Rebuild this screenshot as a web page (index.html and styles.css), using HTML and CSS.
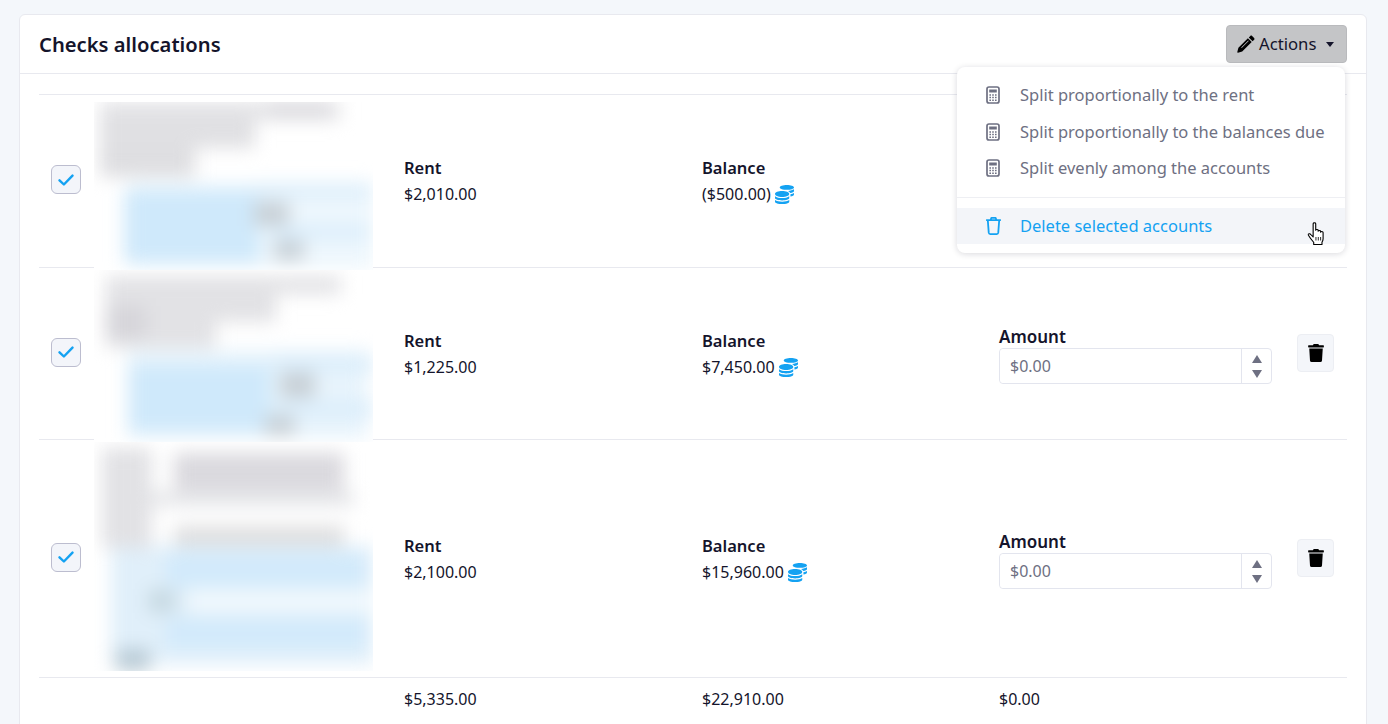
FILE: index.html
```html
<!DOCTYPE html>
<html lang="en">
<head>
    <meta charset="UTF-8">
    <meta name="viewport" content="width=device-width, initial-scale=1.0">
    <title>Checks allocations</title>
    <link rel="stylesheet" href="styles.css">
</head>
<body>
    <svg class="icon-defs" width="0" height="0" aria-hidden="true">
        <symbol id="i-coins" viewBox="0 0 512 512"><path d="M0 405.3V448c0 35.3 86 64 192 64s192-28.7 192-64v-42.7C342.7 434.4 267.2 448 192 448S41.3 434.4 0 405.3zM320 128c106 0 192-28.7 192-64S426 0 320 0 128 28.7 128 64s86 64 192 64zM0 300.4V352c0 35.3 86 64 192 64s192-28.7 192-64v-51.6c-41.3 34-116.9 51.6-192 51.6S41.3 334.4 0 300.4zm416 11c57.3-11.1 96-31.7 96-55.4v-42.7c-23.2 16.4-57.3 27.6-96 34.5v63.6zM192 160C86 160 0 195.8 0 240s86 80 192 80 192-35.8 192-80-86-80-192-80zm219.3 56.3c60-10.8 100.7-32 100.7-56.3v-42.7c-35.5 25.1-96.5 38.6-160.7 41.8 29.5 14.3 51.2 33.5 60 57.2z"/></symbol>
        <symbol id="i-trash" viewBox="0 0 448 512"><path d="M432 32H312l-9.4-18.7A24 24 0 0 0 281.1 0H166.8a23.72 23.72 0 0 0-21.4 13.3L136 32H16A16 16 0 0 0 0 48v32a16 16 0 0 0 16 16h416a16 16 0 0 0 16-16V48a16 16 0 0 0-16-16zM53.2 467a48 48 0 0 0 47.9 45h245.8a48 48 0 0 0 47.9-45L416 128H32z"/></symbol>
        <symbol id="i-calc" viewBox="0 0 14 18"><rect x="1" y="1" width="12" height="16" rx="2" fill="none" stroke="currentColor" stroke-width="1.7"/><path d="M3.2 3.4h7.6v3H3.2zM3.4 8.2h1.6v1.5H3.4zM6.2 8.2h1.6v1.5H6.2zM9 8.2h1.6v1.5H9zM3.4 10.8h1.6v1.5H3.4zM6.2 10.8h1.6v1.5H6.2zM9 10.8h1.6v1.5H9zM3.4 13.4h1.6v1.5H3.4zM6.2 13.4h1.6v1.5H6.2zM9 13.4h1.6v1.5H9z"/></symbol>
        <symbol id="i-check" viewBox="0 0 16 12"><path d="M1.5 6.3l4.4 4.2L14.5 1.6" fill="none" stroke="currentColor" stroke-width="2.4" stroke-linecap="round" stroke-linejoin="round"/></symbol>
    </svg>

    <div class="card">
        <div class="card-header">
            <h1>Checks allocations</h1>
            <div class="actions">
                <button class="btn-actions">
                    <svg class="pencil" viewBox="0 0 18 18"><path d="M13.300.9c.5-.5 1.300-.5 1.800 0l2 2c.5.5.5 1.300 0 1.800L15.600 6.200 11.800 2.400zM10.900 3.300l3.800 3.800-9.500 9.500-4.200 1.100c-.5.100-.8-.2-.7-.7l1.100-4.200zM11.200 5.400l-7 7 .5.500 7-7z"/></svg>
                    Actions
                    <span class="caret"></span>
                </button>
                <div class="menu">
                    <a class="menu-item"><svg class="menu-icon"><use href="#i-calc"/></svg>Split proportionally to the rent</a>
                    <a class="menu-item"><svg class="menu-icon"><use href="#i-calc"/></svg>Split proportionally to the balances due</a>
                    <a class="menu-item"><svg class="menu-icon"><use href="#i-calc"/></svg>Split evenly among the accounts</a>
                    <div class="menu-divider"></div>
                    <a class="menu-item active">
                        <svg class="menu-icon trash-outline" viewBox="0 0 16 18"><path d="M1 4h14M5.200 4l.8-2.300h4l.8 2.300M2.600 4l.9 11.800c.1.800.6 1.300 1.400 1.300h6.200c.8 0 1.300-.5 1.400-1.300L13.400 4" fill="none" stroke="currentColor" stroke-width="1.700" stroke-linejoin="round"/></svg>
                        Delete selected accounts
                        <svg class="hand" viewBox="0 0 17 24" preserveAspectRatio="none"><path d="M5.500 1.800c0-1.300 2.300-1.300 2.300 0v6.400c0-1.100 2.200-1.100 2.200.1v1c0-1.100 2.200-1.100 2.200.1v.9c0-1 2.200-1 2.200.2v6.300c0 1.700-.5 2.600-1 3.400v2.300H6v-2.300c-1-1.300-2.300-2.800-3.700-5.200-1-1.600-1.600-2.400-1.100-3 .6-.7 1.700-.2 2.600 1l1.700 2z" fill="#fff" stroke="#000" stroke-width="1" stroke-linejoin="round"/><path d="M8 15v3.500M10.100 15v3.500M12.200 15v3.500" stroke="#000" stroke-width=".8" fill="none"/></svg>
                    </a>
                </div>
            </div>
        </div>

        <div class="card-body">
            <div class="row row-1">
                <div class="cell-check"><span class="checkbox"><svg><use href="#i-check"/></svg></span></div>
                <div class="shot"><div class="shot-blur shot-1"></div></div>
                <div class="field"><b>Rent</b><span>$2,010.00</span></div>
                <div class="field"><b>Balance</b><span>($500.00) <svg class="coins"><use href="#i-coins"/></svg></span></div>
            </div>

            <div class="row row-2">
                <div class="cell-check"><span class="checkbox"><svg><use href="#i-check"/></svg></span></div>
                <div class="shot"><div class="shot-blur shot-2"></div></div>
                <div class="field"><b>Rent</b><span>$1,225.00</span></div>
                <div class="field"><b>Balance</b><span>$7,450.00 <svg class="coins"><use href="#i-coins"/></svg></span></div>
                <div class="field amount">
                    <b>Amount</b>
                    <div class="number-input">
                        <input type="text" placeholder="$0.00">
                        <div class="spinner"><i class="up"></i><i class="down"></i></div>
                    </div>
                </div>
                <button class="btn-delete"><svg><use href="#i-trash"/></svg></button>
            </div>

            <div class="row row-3">
                <div class="cell-check"><span class="checkbox"><svg><use href="#i-check"/></svg></span></div>
                <div class="shot"><div class="shot-blur shot-3"></div></div>
                <div class="field"><b>Rent</b><span>$2,100.00</span></div>
                <div class="field"><b>Balance</b><span>$15,960.00 <svg class="coins"><use href="#i-coins"/></svg></span></div>
                <div class="field amount">
                    <b>Amount</b>
                    <div class="number-input">
                        <input type="text" placeholder="$0.00">
                        <div class="spinner"><i class="up"></i><i class="down"></i></div>
                    </div>
                </div>
                <button class="btn-delete"><svg><use href="#i-trash"/></svg></button>
            </div>

            <div class="row row-total">
                <div></div>
                <div></div>
                <div>$5,335.00</div>
                <div>$22,910.00</div>
                <div>$0.00</div>
            </div>
        </div>
    </div>
</body>
</html>
```

FILE: styles.css
```css
html, body {
    height: 100%;
    overflow: hidden;
}
body {
    margin: 0;
    padding: 14px 21px 0 19px;
    box-sizing: border-box;
    background-color: #f4f7fb;
    font-family: "Noto Sans", "Open Sans", sans-serif;
    font-size: 16px;
    line-height: 26px;
    color: #14142b;
}
.icon-defs {
    position: absolute;
}
.card {
    background: #fff;
    border: 1px solid #e8e9ef;
    border-radius: 6px;
    height: 900px;
}
.card-header {
    display: flex;
    justify-content: space-between;
    align-items: center;
    height: 58px;
    padding: 0 19px;
    border-bottom: 1px solid #e8e9ef;
}
h1 {
    margin: 0;
    font-size: 20.200px;
    font-weight: 600;
}
.actions {
    position: relative;
}
.btn-actions {
    display: flex;
    align-items: center;
    width: 121px;
    height: 38px;
    padding: 0 10px;
    background: #c4c5c7;
    border: 1px solid #b9babd;
    border-radius: 4px;
    font: inherit;
    font-size: 16.700px;
    color: #14142b;
    white-space: nowrap;
}
.pencil {
    width: 18px;
    height: 18px;
    margin-right: 4px;
    fill: #000;
}
.caret {
    margin-left: 10px;
    border-top: 5px solid #14142b;
    border-left: 4.500px solid transparent;
    border-right: 4.500px solid transparent;
}
.menu {
    position: absolute;
    top: 42px;
    right: 2px;
    z-index: 5;
    width: 388px;
    height: 186px;
    padding-top: 10px;
    box-sizing: border-box;
    background: #fff;
    border-radius: 8px;
    box-shadow: 0 1px 6px rgba(20, 20, 43, 0.16);
    color: #6e7082;
    font-size: 16.500px;
}
.menu-item {
    position: relative;
    display: flex;
    align-items: center;
    height: 36.500px;
    padding-left: 29px;
    white-space: nowrap;
}
.menu-icon {
    width: 14px;
    height: 18px;
    margin-right: 20px;
    color: #6e7082;
    fill: #6e7082;
}
.menu-divider {
    height: 1px;
    margin: 10px 0;
    background: #eeeff3;
}
.menu-item.active {
    height: 36px;
    background: #f3f5f9;
    color: #14a2f2;
}
.trash-outline {
    width: 17px;
    height: 19px;
    margin-left: -1px;
    margin-right: 18px;
    color: #14a2f2;
    fill: none;
}
.hand {
    position: absolute;
    left: 350px;
    top: 14px;
    width: 19px;
    height: 24px;
}
.card-body {
    padding: 20px 19px 0;
}
.row {
    display: grid;
    grid-template-columns: 55px 310px 298px 297px 298px 50px;
    align-items: center;
    border-top: 1px solid #e8e9ef;
    box-sizing: border-box;
}
.row-1 { height: 173px; }
.row-2 { height: 172px; }
.row-3 { height: 238px; }
.row-total {
    padding-top: 8px;
}
.cell-check {
    padding-left: 12px;
    margin-bottom: 3px;
}
.checkbox {
    display: flex;
    align-items: center;
    justify-content: center;
    width: 30px;
    height: 29px;
    box-sizing: border-box;
    background: #f3f5fa;
    border: 1px solid #bcbdcf;
    border-radius: 6px;
    color: #14a2f2;
}
.checkbox svg {
    width: 16px;
    height: 12px;
}
.shot {
    position: relative;
    z-index: 1;
    align-self: start;
    width: 279px;
    overflow: hidden;
    background: #fff;
}
.row-1 .shot { margin: 7px 0 -10px; height: 168px; }
.row-2 .shot { margin: 2px 0 -10px; height: 172px; }
.row-3 .shot { margin-top: 2px; height: 229px; }
.shot-blur {
    height: 100%;
    filter: blur(9px);
    background-repeat: no-repeat;
}
.shot-1 {
    background-image:
        linear-gradient(#d6d5da, #d6d5da), linear-gradient(#e2e2e5, #e2e2e5), linear-gradient(#e0e0e3, #e0e0e3), linear-gradient(#dedee1, #dedee1),
        linear-gradient(#c8d0d6, #c8d0d6), linear-gradient(#c8d0d6, #c8d0d6),
        linear-gradient(#cfe9fb, #cfe9fb), linear-gradient(#dceefb, #dceefb), linear-gradient(#dceefb, #dceefb), linear-gradient(#eef7fd, #eef7fd);
    background-size: 60px 12px, 240px 18px, 155px 30px, 95px 32px, 35px 24px, 30px 20px, 135px 72px, 115px 14px, 100px 16px, 245px 86px;
    background-position: 175px 0, 6px 0, 6px 16px, 6px 43px, 160px 100px, 180px 138px, 30px 88px, 162px 82px, 175px 122px, 34px 80px;
}
.shot-2 {
    background-image:
        linear-gradient(#d6d5da, #d6d5da), linear-gradient(#e2e2e5, #e2e2e5), linear-gradient(#e2e2e5, #e2e2e5), linear-gradient(#e2e2e5, #e2e2e5),
        linear-gradient(#c8d0d6, #c8d0d6), linear-gradient(#c8d0d6, #c8d0d6),
        linear-gradient(#cfe9fb, #cfe9fb), linear-gradient(#dceefb, #dceefb), linear-gradient(#dceefb, #dceefb), linear-gradient(#e8f4fc, #e8f4fc);
    background-size: 40px 32px, 235px 18px, 170px 28px, 110px 28px, 35px 26px, 30px 20px, 140px 66px, 100px 18px, 100px 18px, 240px 88px;
    background-position: 12px 36px, 12px 6px, 12px 24px, 12px 50px, 186px 102px, 171px 145px, 36px 95px, 179px 85px, 179px 130px, 33px 80px;
}
.shot-3 {
    background-image:
        linear-gradient(#dad9de, #dad9de), linear-gradient(#e2e2e5, #e2e2e5), linear-gradient(#dededf, #dededf), linear-gradient(#e4e5e8, #e4e5e8),
        linear-gradient(#b8cad5, #b8cad5), linear-gradient(#c8dae3, #c8dae3),
        linear-gradient(#d2eafb, #d2eafb), linear-gradient(#d2eafb, #d2eafb), linear-gradient(#f0f8fd, #f0f8fd), linear-gradient(#e0effa, #e0effa);
    background-size: 170px 38px, 50px 100px, 170px 20px, 250px 14px, 34px 24px, 28px 24px, 200px 34px, 200px 30px, 195px 24px, 264px 118px;
    background-position: 80px 11px, 8px 6px, 80px 84px, 10px 50px, 22px 207px, 54px 147px, 72px 111px, 72px 176px, 94px 147px, 17px 104px;
}
.field {
    display: flex;
    flex-direction: column;
    white-space: nowrap;
}
.field b {
    font-size: 16.500px;
    font-weight: 600;
}
.coins {
    width: 19px;
    height: 19px;
    vertical-align: -4px;
    fill: #14a2f2;
}
.amount {
    margin-top: 3px;
}
.amount b {
    font-size: 17px;
    line-height: 22px;
}
.number-input {
    display: flex;
    width: 273px;
    height: 36px;
    box-sizing: border-box;
    border: 1px solid #e3e5ee;
    border-radius: 4px;
}
.number-input input {
    flex: 1;
    min-width: 0;
    padding: 0 10px;
    border: 0;
    border-radius: 4px;
    outline: 0;
    font: inherit;
}
.number-input input::placeholder {
    color: #6e7082;
    opacity: 1;
}
.spinner {
    display: flex;
    flex-direction: column;
    align-items: center;
    justify-content: center;
    gap: 7px;
    width: 29px;
    border-left: 1px solid #e3e5ee;
}
.spinner i {
    border-left: 5.500px solid transparent;
    border-right: 5.500px solid transparent;
}
.spinner .up {
    border-bottom: 8px solid #6e7082;
}
.spinner .down {
    border-top: 8px solid #6e7082;
}
.btn-delete {
    display: flex;
    align-items: center;
    justify-content: center;
    width: 37px;
    height: 38px;
    margin-bottom: 1px;
    padding: 0;
    background: #f4f6fa;
    border: 1px solid #eceef3;
    border-radius: 4px;
}
.btn-delete svg {
    width: 16px;
    height: 18px;
    fill: #000;
}
```
